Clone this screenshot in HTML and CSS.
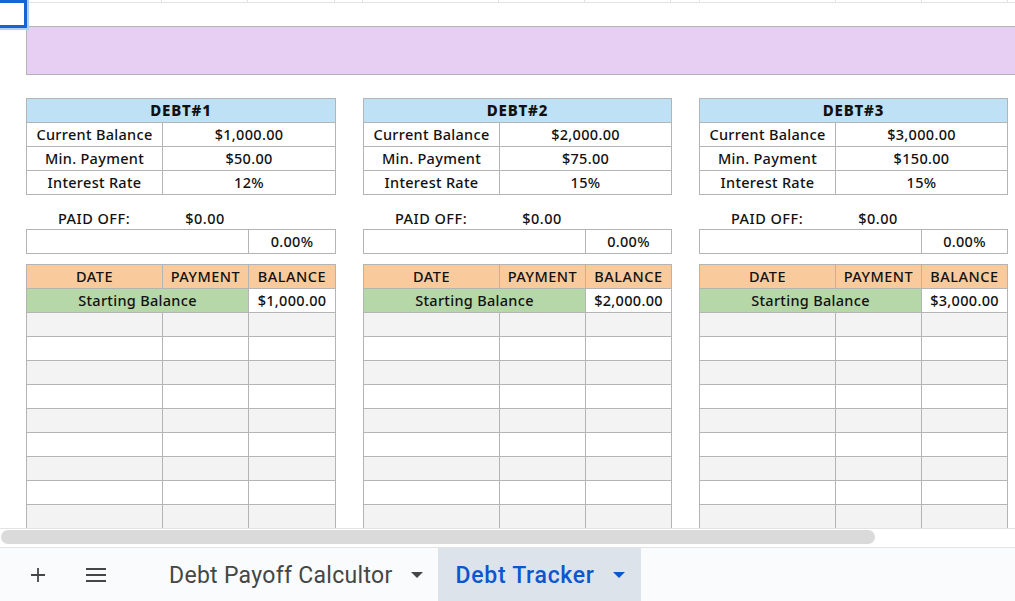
FILE: index.html
```html
<!DOCTYPE html>
<html lang="en">
<head>
    <meta charset="UTF-8">
    <title>Debt Tracker</title>
    <link rel="stylesheet" href="styles.css">
</head>
<body>
    <div class="sheet">
        <div class="toprow">
            <div class="gc w26"></div><div class="gc w136"></div><div class="gc w86"></div><div class="gc w87"></div><div class="gc w28"></div>
            <div class="gc w136"></div><div class="gc w86"></div><div class="gc w86"></div><div class="gc w29"></div>
            <div class="gc w136"></div><div class="gc w86"></div><div class="gc w86"></div>
        </div>
        <div class="cursor"></div>
        <div class="band"></div>

        <div class="debts">
            <section class="debt">
                <div class="card">
                    <div class="title">DEBT#1</div>
                    <div class="cell">Current Balance</div><div class="cell span2">$1,000.00</div>
                    <div class="cell">Min. Payment</div><div class="cell span2">$50.00</div>
                    <div class="cell">Interest Rate</div><div class="cell span2">12%</div>
                </div>
                <div class="paid"><span>PAID OFF:</span><span>$0.00</span></div>
                <div class="progress"><div class="cell span2"></div><div class="cell">0.00%</div></div>
                <div class="log">
                    <div class="cell hd">DATE</div><div class="cell hd">PAYMENT</div><div class="cell hd">BALANCE</div>
                    <div class="cell start span2">Starting Balance</div><div class="cell">$1,000.00</div>
                </div>
            </section>

            <section class="debt">
                <div class="card">
                    <div class="title">DEBT#2</div>
                    <div class="cell">Current Balance</div><div class="cell span2">$2,000.00</div>
                    <div class="cell">Min. Payment</div><div class="cell span2">$75.00</div>
                    <div class="cell">Interest Rate</div><div class="cell span2">15%</div>
                </div>
                <div class="paid"><span>PAID OFF:</span><span>$0.00</span></div>
                <div class="progress"><div class="cell span2"></div><div class="cell">0.00%</div></div>
                <div class="log">
                    <div class="cell hd">DATE</div><div class="cell hd">PAYMENT</div><div class="cell hd">BALANCE</div>
                    <div class="cell start span2">Starting Balance</div><div class="cell">$2,000.00</div>
                </div>
            </section>

            <section class="debt">
                <div class="card">
                    <div class="title">DEBT#3</div>
                    <div class="cell">Current Balance</div><div class="cell span2">$3,000.00</div>
                    <div class="cell">Min. Payment</div><div class="cell span2">$150.00</div>
                    <div class="cell">Interest Rate</div><div class="cell span2">15%</div>
                </div>
                <div class="paid"><span>PAID OFF:</span><span>$0.00</span></div>
                <div class="progress"><div class="cell span2"></div><div class="cell">0.00%</div></div>
                <div class="log">
                    <div class="cell hd">DATE</div><div class="cell hd">PAYMENT</div><div class="cell hd">BALANCE</div>
                    <div class="cell start span2">Starting Balance</div><div class="cell">$3,000.00</div>
                </div>
            </section>
        </div>
    </div>

    <div class="hscroll"><div class="thumb"></div></div>

    <div class="tabs">
        <div class="tab-icon">
            <svg width="18" height="18" viewBox="0 0 18 18"><path d="M9 2v14M2 9h14" stroke="#444746" stroke-width="1.8" fill="none"/></svg>
        </div>
        <div class="tab-icon">
            <svg width="24" height="16" viewBox="0 0 24 16"><path d="M2 2h20M2 8h20M2 14h20" stroke="#444746" stroke-width="1.8" fill="none"/></svg>
        </div>
        <div class="tab">Debt Payoff Calcultor <span class="caret"></span></div>
        <div class="tab active">Debt Tracker <span class="caret"></span></div>
    </div>

    <script>
        // empty payment rows, alternating shading
        document.querySelectorAll('.log').forEach(log => {
            for (let i = 0; i < 9; i++) {
                for (let c = 0; c < 3; c++) {
                    let cell = document.createElement('div');
                    cell.className = 'cell' + (i % 2 == 0 ? ' shade' : '');
                    log.appendChild(cell);
                }
            }
        });
    </script>
</body>
</html>
```

FILE: styles.css
```css
body {
    margin: 0;
    background: #fff;
    font-family: 'Noto Sans', 'Lato', sans-serif;
    color: #111;
    overflow: hidden;
}

.sheet {
    position: relative;
    height: 528px;
    overflow: hidden;
}

.toprow {
    display: flex;
    height: 2px;
    border-bottom: 1px solid #e2e2e2;
    margin-bottom: 23px;
}

.gc {
    flex: none;
    border-right: 1px solid #e2e2e2;
    box-sizing: border-box;
}
.w26 { width: 26px; }
.w28 { width: 28px; }
.w29 { width: 29px; }
.w86 { width: 86px; }
.w87 { width: 87px; }
.w136 { width: 136px; }

.cursor {
    position: absolute;
    left: -3px;
    top: 0;
    width: 24px;
    height: 22px;
    border: 3px solid #1a62d8;
    box-shadow: 1px 1px 0 1px #b3cdf7;
}

.band {
    margin-left: 26px;
    height: 47px;
    background: #e6cff2;
    border-top: 1px solid #b4b4b4;
    border-bottom: 1px solid #b4b4b4;
    border-left: 1px solid #b4b4b4;
}

.debts {
    display: grid;
    grid-template-columns: 310px 309px 309px;
    column-gap: 27px;
    margin: 23px 0 0 26px;
}

.card, .progress, .log {
    display: grid;
    grid-template-columns: 136px 86px 1fr;
    grid-auto-rows: 24px;
    border-top: 1px solid #b4b4b4;
    border-left: 1px solid #b4b4b4;
}

.cell, .title {
    box-sizing: border-box;
    border-right: 1px solid #b4b4b4;
    border-bottom: 1px solid #b4b4b4;
    font-size: 14.5px;
    font-weight: 500;
    line-height: 23px;
    letter-spacing: 0.3px;
    text-align: center;
    white-space: nowrap;
    overflow: hidden;
}

.span2 {
    grid-column: span 2;
}

.title {
    grid-column: span 3;
    background: #bfe1f6;
    font-size: 15px;
    font-weight: 800;
    letter-spacing: 0.8px;
}

.paid {
    display: grid;
    grid-template-columns: 136px 86px;
    margin-top: 12px;
    height: 22px;
    line-height: 22px;
    font-size: 14.5px;
    font-weight: 500;
    letter-spacing: 0.5px;
    text-align: center;
}

.log {
    margin-top: 10px;
}

.hd {
    background: #f9cb9c;
    letter-spacing: 0.5px;
}

.start {
    background: #b6d7a8;
}

.shade {
    background: #f3f3f3;
}

.hscroll {
    height: 17px;
    border-top: 1px solid #e3e3e3;
    border-bottom: 1px solid #e3e3e3;
    padding-top: 1px;
    box-sizing: content-box;
}

.thumb {
    width: 874px;
    height: 14px;
    margin-left: 1px;
    border-radius: 7px;
    background: #dadada;
}

.tabs {
    display: flex;
    align-items: stretch;
    height: 53px;
    background: #f9fbfd;
    font-family: 'Roboto', 'Noto Sans', sans-serif;
}

.tab-icon {
    display: flex;
    align-items: center;
    justify-content: center;
    width: 58px;
}

.tab-icon:first-child {
    margin-left: 9px;
}

.tab {
    display: flex;
    align-items: center;
    padding: 1px 15px 0 44px;
    font-size: 23px;
    letter-spacing: 0.3px;
    color: #444746;
}

.tab.active {
    background: #dde3ea;
    color: #0b57d0;
    font-weight: 500;
    letter-spacing: 0.7px;
    padding: 1px 16px 0 18px;
}

.caret {
    display: inline-block;
    margin-left: 18px;
    width: 0;
    height: 0;
    border-left: 6px solid transparent;
    border-right: 6px solid transparent;
    border-top: 6px solid #444746;
}

.tab.active .caret {
    border-top-color: #0b57d0;
}
```
